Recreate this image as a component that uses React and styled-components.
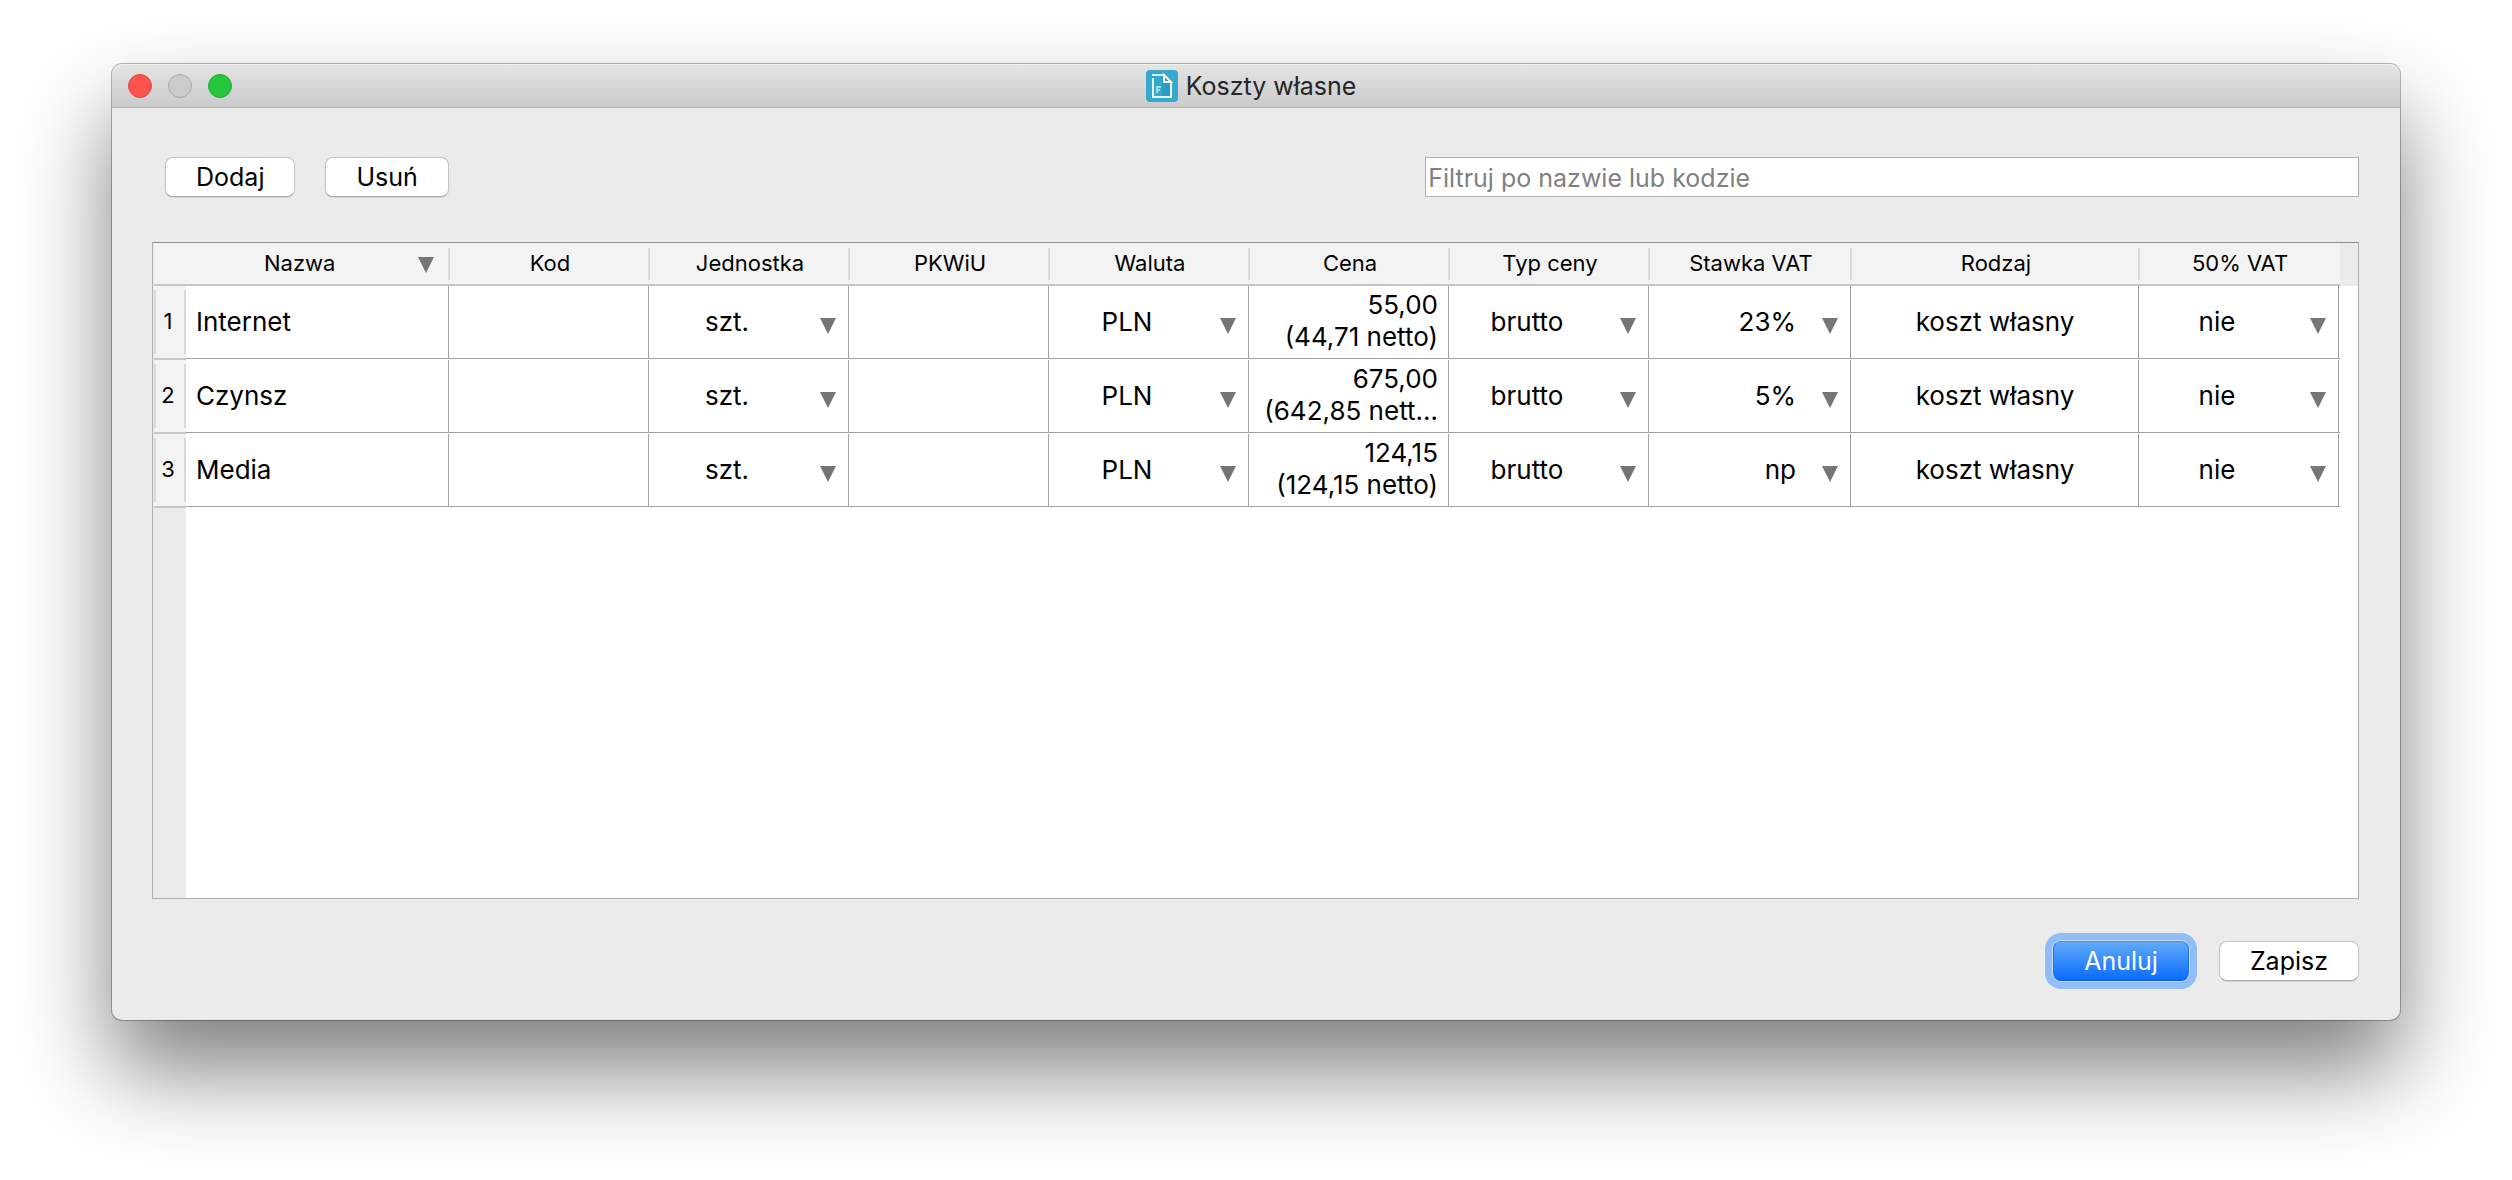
import React, { useState } from "react";
import styled, { createGlobalStyle } from "styled-components";

const initialItems = [
  { name: "Internet", code: "", unit: "szt.", pkwiu: "", currency: "PLN", price: "55,00", other: "(44,71 netto)", priceType: "brutto", vat: "23%", kind: "koszt własny", halfVat: "nie" },
  { name: "Czynsz", code: "", unit: "szt.", pkwiu: "", currency: "PLN", price: "675,00", other: "(642,85 nett…", priceType: "brutto", vat: "5%", kind: "koszt własny", halfVat: "nie" },
  { name: "Media", code: "", unit: "szt.", pkwiu: "", currency: "PLN", price: "124,15", other: "(124,15 netto)", priceType: "brutto", vat: "np", kind: "koszt własny", halfVat: "nie" },
];

const columns = [
  { key: "name", label: "Nazwa", width: 264, align: "left", sorted: true },
  { key: "code", label: "Kod", width: 200 },
  { key: "unit", label: "Jednostka", width: 200, options: ["szt.", "kg", "godz."] },
  { key: "pkwiu", label: "PKWiU", width: 200 },
  { key: "currency", label: "Waluta", width: 200, options: ["PLN", "EUR", "USD"] },
  { key: "price", label: "Cena", width: 200, align: "right" },
  { key: "priceType", label: "Typ ceny", width: 200, options: ["brutto", "netto"] },
  { key: "vat", label: "Stawka VAT", width: 202, align: "right", options: ["23%", "8%", "5%", "np"] },
  { key: "kind", label: "Rodzaj", width: 288 },
  { key: "halfVat", label: "50% VAT", width: 200, options: ["nie", "tak"] },
];

const Arrow = () => (
  <ArrowIcon viewBox="0 0 16 16" aria-hidden="true">
    <path d="M0 0h16L8 16z" fill="#757575" />
  </ArrowIcon>
);

const AppIcon = () => (
  <svg width="32" height="32" viewBox="0 0 32 32" aria-hidden="true">
    <rect width="32" height="32" rx="4" fill="#35a9cc" />
    <path d="M7 5h11l8 8v15H16V5z" fill="#2b9dc1" />
    <path d="M6 5h13M7 8v19h18V13" fill="none" stroke="#e4f5fa" strokeWidth="2" />
    <path d="M18 5v7h7z" fill="none" stroke="#fff" strokeWidth="2" />
    <path d="M11 23v-6h4M11 20h3" fill="none" stroke="#a5dbea" strokeWidth="2" />
  </svg>
);

const App = () => {
  const [items, setItems] = useState(initialItems);
  const [filter, setFilter] = useState("");

  const updateItem = (name, key, value) => {
    setItems(items.map((item) => (item.name === name ? { ...item, [key]: value } : item)));
  };

  const visible = items.filter((item) =>
    (item.name + item.code).toLowerCase().includes(filter.toLowerCase())
  );

  const renderCell = (item, col) => {
    if (col.options) {
      return (
        <SelectBox>
          <Select
            $align={col.align}
            aria-label={`${col.label}: ${item.name}`}
            value={item[col.key]}
            onChange={(e) => updateItem(item.name, col.key, e.target.value)}
          >
            {col.options.map((option) => (
              <option key={option}>{option}</option>
            ))}
          </Select>
          <Arrow />
        </SelectBox>
      );
    }
    if (col.key === "price") {
      return (
        <>
          <PriceLine>{item.price}</PriceLine>
          <PriceLine>{item.other}</PriceLine>
        </>
      );
    }
    return item[col.key];
  };

  return (
    <Desktop>
      <GlobalStyle />
      <Window>
        <TitleBar>
          <Lights>
            <Light type="button" aria-label="Zamknij" $color="#ff544d" $border="#e2443f" />
            <Light type="button" aria-label="Minimalizuj" $color="#cbcbcb" $border="#a9a9a9" />
            <Light type="button" aria-label="Powiększ" $color="#26c73c" $border="#1dad2d" />
          </Lights>
          <Title>
            <AppIcon />
            Koszty własne
          </Title>
        </TitleBar>

        <Content>
          <Toolbar>
            <Actions>
              <Button type="button">Dodaj</Button>
              <Button type="button">Usuń</Button>
            </Actions>
            <Filter
              type="text"
              aria-label="Filtruj po nazwie lub kodzie"
              placeholder="Filtruj po nazwie lub kodzie"
              value={filter}
              onChange={(e) => setFilter(e.target.value)}
            />
          </Toolbar>

          <TableFrame>
            <Table>
              <colgroup>
                <Col $width={32} />
                {columns.map((col) => (
                  <Col key={col.key} $width={col.width} />
                ))}
                <col />
              </colgroup>
              <thead>
                <tr>
                  <Corner />
                  {columns.map((col, index) => (
                    <HeadCell key={col.key} scope="col" $last={index === columns.length - 1}>
                      {col.sorted ? (
                        <SortButton type="button">
                          {col.label}
                          <Arrow />
                        </SortButton>
                      ) : (
                        col.label
                      )}
                    </HeadCell>
                  ))}
                  <HeadFiller />
                </tr>
              </thead>
              <tbody>
                {visible.map((item, index) => (
                  <tr key={item.name}>
                    <RowHead scope="row">{index + 1}</RowHead>
                    {columns.map((col) => (
                      <Cell key={col.key} $align={col.align} $flush={!!col.options}>
                        {renderCell(item, col)}
                      </Cell>
                    ))}
                    <td />
                  </tr>
                ))}
              </tbody>
            </Table>
          </TableFrame>

          <Footer>
            <PrimaryButton type="button">Anuluj</PrimaryButton>
            <Button type="button">Zapisz</Button>
          </Footer>
        </Content>
      </Window>
    </Desktop>
  );
};

const GlobalStyle = createGlobalStyle`
  * {
    box-sizing: border-box;
  }
  body {
    margin: 0;
    background: #fff;
    color: #000;
    font-family: Inter, "Liberation Sans", sans-serif;
    font-size: 25px;
  }
  button, input, select {
    font: inherit;
    color: inherit;
  }
`;

const Desktop = styled.div`
  display: flex;
  min-height: 100vh;
  padding: 64px 112px 160px;
`;

const Window = styled.main`
  display: flex;
  flex-direction: column;
  flex: 1;
  min-width: 0;
  background: #ebebeb;
  border-radius: 10px;
  box-shadow: 0 0 0 1px rgba(0, 0, 0, 0.28), 0 50px 90px rgba(0, 0, 0, 0.5);
`;

const TitleBar = styled.header`
  display: grid;
  grid-template-columns: 1fr auto 1fr;
  align-items: center;
  height: 44px;
  padding: 0 16px;
  background: linear-gradient(#e4e4e4, #cbcbcb);
  border-top: 1px solid #f1f1f1;
  border-bottom: 1px solid #aeaeae;
  border-radius: 10px 10px 0 0;
`;

const Lights = styled.div`
  display: flex;
  gap: 16px;
`;

const Light = styled.button`
  width: 24px;
  height: 24px;
  padding: 0;
  border: 1px solid ${(props) => props.$border};
  border-radius: 50%;
  background: ${(props) => props.$color};
`;

const Title = styled.h1`
  display: flex;
  align-items: center;
  gap: 8px;
  margin: 0;
  padding-right: 10px;
  color: #262626;
  font-size: 25px;
  font-weight: 400;
`;

const Content = styled.div`
  display: flex;
  flex-direction: column;
  flex: 1;
  padding: 49px 41px 39px 40px;
`;

const Toolbar = styled.div`
  display: grid;
  grid-template-columns: 15fr 11fr;
  align-items: center;
  margin-bottom: 45px;
`;

const Actions = styled.div`
  display: flex;
  gap: 30px;
  padding-left: 13px;
`;

const Button = styled.button`
  height: 40px;
  padding: 0 30px;
  border: 1px solid #c3c3c3;
  border-bottom-color: #ababab;
  border-radius: 8px;
  background: #fff;
  box-shadow: 0 1px 1px rgba(0, 0, 0, 0.1);
  line-height: 36px;
`;

const PrimaryButton = styled(Button)`
  border-color: #3f8ff0 #1a70f0 #0a5ce8;
  background: linear-gradient(#62aaf9, #0a6dff);
  box-shadow: 0 0 0 1px #cfdff2, 0 0 0 8px #90bdf5;
  color: #fff;
`;

const Filter = styled.input`
  width: 100%;
  height: 40px;
  padding: 2px 2px 0;
  border: 1px solid #b0b0b0;
  border-radius: 0;
  background: #fff;

  &::placeholder {
    color: #808080;
    opacity: 1;
  }
`;

const TableFrame = styled.div`
  flex: 1;
  padding-left: 1px;
  overflow-x: auto;
  border: 1px solid #b0b0b0;
  border-top-color: #8e8e8e;
  background: linear-gradient(to right, #ebebeb 33px, #fff 33px);
`;

const Table = styled.table`
  width: 100%;
  table-layout: fixed;
  border-collapse: separate;
  border-spacing: 0;
`;

const Col = styled.col`
  width: ${(props) => props.$width}px;
`;

const Corner = styled.td`
  border-bottom: 2px solid #c6c6c6;
  background: #f3f3f3;
`;

/* short tick on the right edge separates neighbouring headings */
const HeadCell = styled.th`
  height: 43px;
  padding: 0 0 2px;
  border-bottom: 2px solid #c6c6c6;
  background: ${(props) =>
    props.$last
      ? "#f3f3f3"
      : "linear-gradient(#d9d9d9, #d9d9d9) right center / 2px 32px no-repeat #f3f3f3"};
  font-size: 22px;
  font-weight: 400;
  line-height: 26px;
`;

const HeadFiller = styled.td`
  background: #ebebeb;
`;

const ArrowIcon = styled.svg`
  width: 16px;
  height: 16px;
  pointer-events: none;
`;

const SortButton = styled.button`
  display: flex;
  align-items: center;
  justify-content: space-between;
  width: 100%;
  padding: 0 16px 0 78px;
  border: 0;
  background: none;

  ${ArrowIcon} {
    margin-top: 4px;
  }
`;

const RowHead = styled.th`
  height: 74px;
  padding: 0 4px 2px 0;
  border-bottom: 2px solid #c6c6c6;
  background: linear-gradient(#d9d9d9, #d9d9d9) left center / 2px 64px no-repeat,
    linear-gradient(#d9d9d9, #d9d9d9) right center / 2px 64px no-repeat #f3f3f3;
  font-size: 22px;
  font-weight: 400;
`;

const Cell = styled.td`
  height: 74px;
  padding: ${(props) => (props.$flush ? "0 0 4px" : "0 12px 4px 10px")};
  background: linear-gradient(#a0a0a0, #a0a0a0) 0 calc(100% - 1px) / 100% 1px no-repeat,
    linear-gradient(#a0a0a0, #a0a0a0) calc(100% - 1px) 0 / 1px calc(100% - 1px) no-repeat #fff;
  font-size: 26px;
  text-align: ${(props) => props.$align || "center"};
`;

const PriceLine = styled.div`
  line-height: 32px;
  white-space: nowrap;
`;

const SelectBox = styled.div`
  display: grid;
  align-items: center;

  > * {
    grid-area: 1 / 1;
  }
  ${ArrowIcon} {
    justify-self: end;
    margin: 10px 14px 0 0;
  }
`;

const Select = styled.select`
  width: 100%;
  height: 64px;
  padding: 0 56px 0 10px;
  border: 0;
  appearance: none;
  background: transparent;
  text-align-last: ${(props) => props.$align || "center"};
`;

const Footer = styled.div`
  display: flex;
  justify-content: flex-end;
  gap: 30px;
  margin-top: 42px;
`;

export default App;
